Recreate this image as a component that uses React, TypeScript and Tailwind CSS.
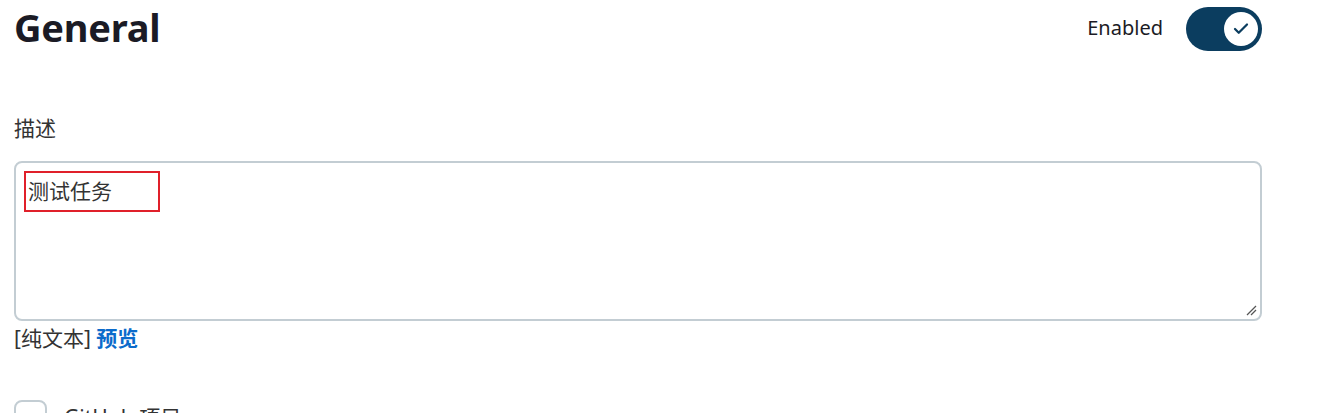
import { Check } from 'lucide-react';

export default function App() {
    return (
        <div className="w-[1323px] h-[413px] overflow-hidden bg-white font-['Noto_Sans','Noto_Sans_CJK_SC',sans-serif] text-[#1b1b25]">
            <div className="w-[1248px] ml-[14px]">
                {/* Header */}
                <div className="flex items-center justify-between h-[57px]">
                    <h1 className="text-[38px] font-bold leading-none tracking-[-0.2px] -mt-[3px]">General</h1>
                    <div className="flex items-center gap-[23px]">
                        <span className="text-[20px] leading-none -mt-[1px]">Enabled</span>
                        <div className="w-[76px] h-[44px] rounded-full bg-[#0b3d5f] flex items-center justify-end pr-[4px]">
                            <div className="w-[34px] h-[34px] rounded-full bg-white flex items-center justify-center">
                                <Check className="w-[18px] h-[18px] text-[#0b3d5f]" strokeWidth={3} />
                            </div>
                        </div>
                    </div>
                </div>

                {/* Description */}
                <div className="mt-[57px] text-[21px] leading-[28px] text-[#333]">描述</div>
                <div className="relative mt-[19px] h-[160px] rounded-[8px] border-2 border-[#c3cdd3]">
                    <div className="pl-[12px] pt-[14px] text-[21px] leading-[28px] text-[#333]">测试任务</div>
                    <div className="absolute left-[8px] top-[8px] w-[136px] h-[41px] border-2 border-[#e0202a]" />
                    <svg className="absolute right-[3px] bottom-[3px]" width="12" height="12" viewBox="0 0 12 12">
                        <line x1="2" y1="11" x2="11" y2="2" stroke="#555" strokeWidth="1.3" />
                        <line x1="6" y1="11" x2="11" y2="6" stroke="#555" strokeWidth="1.3" />
                    </svg>
                </div>
                <div className="mt-[3px] text-[21px] leading-[28px] text-[#333]">
                    [纯文本] <span className="font-bold text-[#0b6bcb]">预览</span>
                </div>

                {/* GitHub project */}
                <div className="mt-[48px] flex items-center gap-[17px]">
                    <div className="w-[33px] h-[33px] rounded-[8px] border-2 border-[#c3cdd3] bg-white" />
                    <span className="text-[21px] leading-[28px] text-[#333]">GitHub 项目</span>
                </div>
            </div>
        </div>
    );
}
